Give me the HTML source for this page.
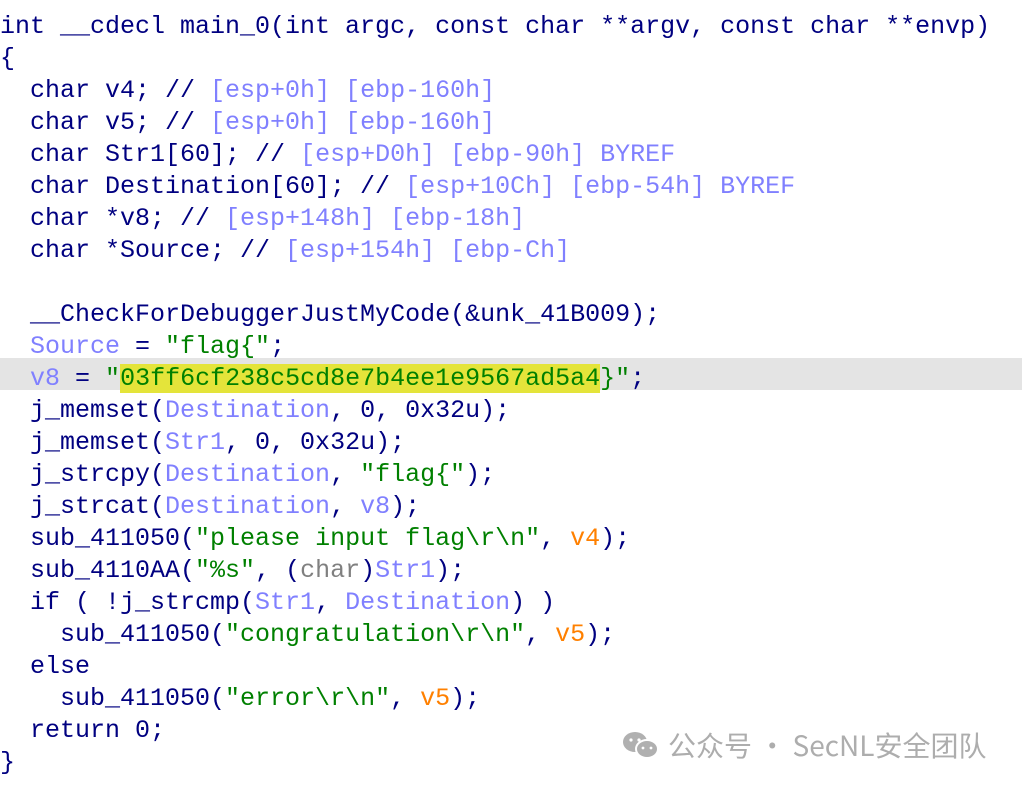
<!DOCTYPE html><html><head><style>
body{margin:0;background:#fff;width:1022px;height:788px;overflow:hidden;position:relative}
pre{margin:0;position:absolute;top:11px;left:0;font-family:"Liberation Mono",monospace;font-size:25px;line-height:32px;color:#000080;white-space:pre}
.v{color:#8080ff}.s{color:#008000}.o{color:#ff8000}.g{color:#808080}
.hl{position:absolute;top:358px;left:0;width:1022px;height:32px;background:#e4e4e4}
.y{background:#e4e43a}
.wm{position:absolute;left:622px;top:724px;font-family:"Noto Sans CJK SC",sans-serif;font-size:28px;color:#adadad;line-height:42px;white-space:nowrap}
</style></head><body>
<div class="hl"></div>
<pre>int __cdecl main_0(int argc, const char **argv, const char **envp)
{
  char v4; // <span class="v">[esp+0h] [ebp-160h]</span>
  char v5; // <span class="v">[esp+0h] [ebp-160h]</span>
  char Str1[60]; // <span class="v">[esp+D0h] [ebp-90h] BYREF</span>
  char Destination[60]; // <span class="v">[esp+10Ch] [ebp-54h] BYREF</span>
  char *v8; // <span class="v">[esp+148h] [ebp-18h]</span>
  char *Source; // <span class="v">[esp+154h] [ebp-Ch]</span>

  __CheckForDebuggerJustMyCode(&amp;unk_41B009);
  <span class="v">Source</span> = <span class="s">"flag{"</span>;
  <span class="v">v8</span> = <span class="s">"<span class="y">03ff6cf238c5cd8e7b4ee1e9567ad5a4</span>}"</span>;
  j_memset(<span class="v">Destination</span>, 0, 0x32u);
  j_memset(<span class="v">Str1</span>, 0, 0x32u);
  j_strcpy(<span class="v">Destination</span>, <span class="s">"flag{"</span>);
  j_strcat(<span class="v">Destination</span>, <span class="v">v8</span>);
  sub_411050(<span class="s">"please input flag\r\n"</span>, <span class="o">v4</span>);
  sub_4110AA(<span class="s">"%s"</span>, (<span class="g">char</span>)<span class="v">Str1</span>);
  if ( !j_strcmp(<span class="v">Str1</span>, <span class="v">Destination</span>) )
    sub_411050(<span class="s">"congratulation\r\n"</span>, <span class="o">v5</span>);
  else
    sub_411050(<span class="s">"error\r\n"</span>, <span class="o">v5</span>);
  return 0;
}</pre>
<div class="wm"><svg width="38" height="30" viewBox="0 0 38 30" style="vertical-align:-5px;margin-right:8px"><ellipse cx="13" cy="11" rx="12" ry="10" fill="#b0b0b0"/><ellipse cx="25" cy="18" rx="11" ry="9" fill="#b0b0b0" stroke="#fff" stroke-width="2"/><circle cx="9" cy="9" r="1.6" fill="#fff"/><circle cx="17" cy="9" r="1.6" fill="#fff"/><circle cx="21" cy="17" r="1.4" fill="#fff"/><circle cx="29" cy="17" r="1.4" fill="#fff"/></svg>公众号 · SecNL安全团队</div>
</body></html>
